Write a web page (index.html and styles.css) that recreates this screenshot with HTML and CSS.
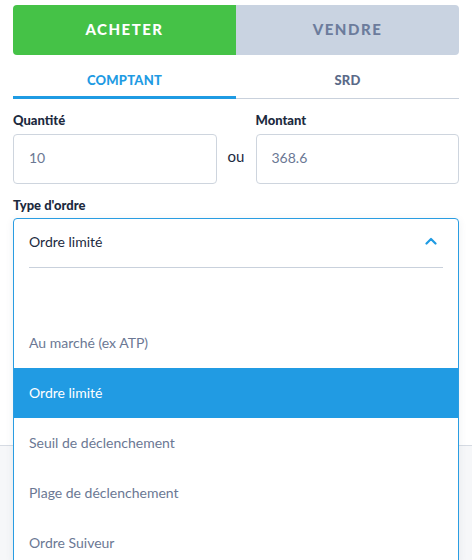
FILE: index.html
```html
<!DOCTYPE html>
<html lang="fr">

<head>
    <meta charset="UTF-8">
    <meta name="viewport" content="width=device-width, initial-scale=1.0">
    <title>Passer un ordre</title>
    <link rel="stylesheet" href="styles.css">
</head>

<body>
    <div class="order-panel">
        <!-- sens de l'ordre -->
        <div class="side-tabs">
            <div class="side-tab buy active">ACHETER</div>
            <div class="side-tab sell">VENDRE</div>
        </div>

        <div class="mode-tabs">
            <div class="mode-tab active">COMPTANT</div>
            <div class="mode-tab">SRD</div>
        </div>

        <div class="qty-row">
            <div class="field">
                <label for="qty">Quantité</label>
                <input type="text" id="qty" value="10">
            </div>
            <div class="or">ou</div>
            <div class="field">
                <label for="amount">Montant</label>
                <input type="text" id="amount" value="368.6">
            </div>
        </div>

        <div class="field">
            <label>Type d'ordre</label>
            <div class="select-wrap">
                <!-- liste ouverte -->
                <div class="select-menu">
                    <div class="select-head">
                        <span>Ordre limité</span>
                        <svg class="chevron" width="12" height="8" viewBox="0 0 12 8">
                            <path d="M1.5 6.5 L6 2 L10.5 6.5" fill="none" stroke="#1f9be3" stroke-width="2.2" stroke-linecap="round" stroke-linejoin="round"/>
                        </svg>
                    </div>
                    <div class="select-sep"></div>
                    <div class="select-gap"></div>
                    <div class="option">Au marché (ex ATP)</div>
                    <div class="option selected">Ordre limité</div>
                    <div class="option">Seuil de déclenchement</div>
                    <div class="option">Plage de déclenchement</div>
                    <div class="option">Ordre Suiveur</div>
                </div>
            </div>
        </div>
    </div>

    <div class="order-footer"></div>
</body>

</html>
```

FILE: styles.css
```css
body {
    font-family: Lato, "Open Sans", sans-serif;
    margin: 0;
    background-color: #ffffff;
    color: #1c2a3e;
    height: 560px;
    overflow: hidden;
}

.order-panel {
    padding: 5px 13px 0;
}

/* onglets acheter / vendre */
.side-tabs {
    display: flex;
    height: 50px;
    border-radius: 4px;
    overflow: hidden;
}

.side-tab {
    flex: 1;
    display: flex;
    align-items: center;
    justify-content: center;
    padding-bottom: 2px;
    font-size: 15px;
    font-weight: 900;
    letter-spacing: 1.5px;
}

.side-tab.buy {
    background-color: #45c247;
    color: #ffffff;
}

.side-tab.sell {
    background-color: #c9d3e1;
    color: #6c7c9c;
}

/* comptant / srd */
.mode-tabs {
    display: flex;
    height: 44px;
}

.mode-tab {
    flex: 1;
    display: flex;
    align-items: center;
    justify-content: center;
    font-size: 13px;
    font-weight: 900;
    letter-spacing: 0.2px;
    color: #5a6a88;
    border-bottom: 1px solid #c9d1dc;
    padding-top: 6px;
}

.mode-tab.active {
    color: #1f9be3;
    border-bottom: 3px solid #1f9be3;
    padding-top: 8px;
}

.qty-row {
    display: grid;
    grid-template-columns: 1fr 39px 1fr;
    margin-top: 13px;
}

.or {
    display: flex;
    align-items: center;
    justify-content: center;
    padding-top: 16px;
    font-size: 15px;
    color: #1c2a3e;
}

.field label {
    display: block;
    font-size: 13px;
    font-weight: 900;
    line-height: 16px;
    margin-bottom: 6px;
}

.field input {
    box-sizing: border-box;
    width: 100%;
    height: 50px;
    padding: 0 15px 3px;
    border: 1px solid #ced5de;
    border-radius: 4px;
    font-family: inherit;
    font-size: 14px;
    color: #6b7894;
    outline: none;
}

.qty-row + .field {
    margin-top: 13px;
}

/* liste type d'ordre */
.select-wrap {
    position: relative;
    height: 50px;
}

.select-menu {
    position: absolute;
    top: -1px;
    left: 0;
    right: 0;
    height: 345px;
    overflow: hidden;
    background-color: #ffffff;
    border: 1px solid #2a9de2;
    border-radius: 4px;
    box-shadow: 0 2px 8px rgba(40, 60, 90, 0.08);
    z-index: 2;
}

.select-head {
    display: flex;
    align-items: center;
    justify-content: space-between;
    height: 44px;
    padding: 0 21px 4px 15px;
    font-size: 14px;
    color: #1c2a3e;
}

.select-sep {
    height: 1px;
    margin: 0 15px;
    background-color: #c9d1dc;
}

.select-gap {
    height: 50px;
}

.option {
    display: flex;
    align-items: center;
    height: 50px;
    padding: 0 15px 2px;
    box-sizing: border-box;
    font-size: 14px;
    color: #6b7894;
}

.option.selected {
    background-color: #219be3;
    color: #ffffff;
}

.order-footer {
    margin-top: 176px;
    height: 116px;
    border-top: 1px solid #d6dbe3;
    background-color: #f6f7f9;
}
```
